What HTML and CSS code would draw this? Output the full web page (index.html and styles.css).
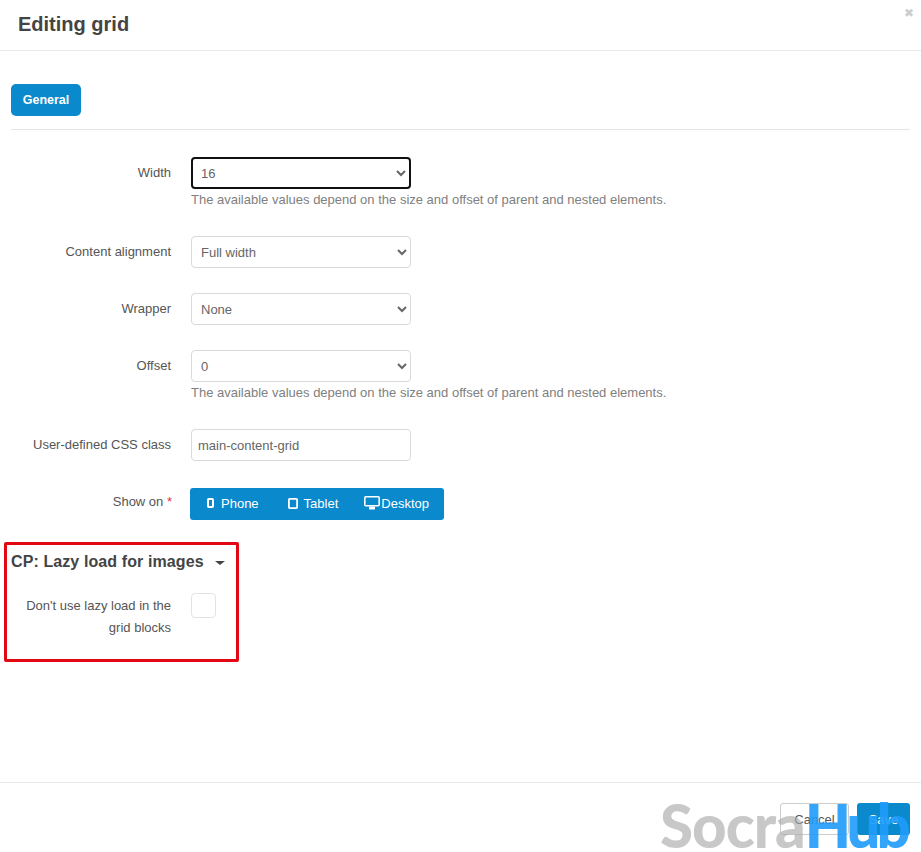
FILE: index.html
```html
<!DOCTYPE html>
<html lang="en">
<head>
    <meta charset="UTF-8">
    <meta name="viewport" content="width=device-width, initial-scale=1.0">
    <title>Editing grid</title>
    <link rel="stylesheet" href="styles.css">
</head>
<body>
    <div class="modal">
        <div class="modal-header">
            <h2>Editing grid</h2>
            <span class="close">&#10006;</span>
        </div>

        <div class="modal-body">
            <div class="tabs">
                <button type="button" class="tab">General</button>
            </div>

            <div class="row row-help">
                <label class="row-label">Width</label>
                <div class="field">
                    <select class="control select-focused"><option>16</option></select>
                    <p class="help">The available values depend on the size and offset of parent and nested elements.</p>
                </div>
            </div>

            <div class="row">
                <label class="row-label">Content alignment</label>
                <div class="field">
                    <select class="control"><option>Full width</option></select>
                </div>
            </div>

            <div class="row">
                <label class="row-label">Wrapper</label>
                <div class="field">
                    <select class="control"><option>None</option></select>
                </div>
            </div>

            <div class="row row-help">
                <label class="row-label">Offset</label>
                <div class="field">
                    <select class="control"><option>0</option></select>
                    <p class="help">The available values depend on the size and offset of parent and nested elements.</p>
                </div>
            </div>

            <div class="row row-css">
                <label class="row-label">User-defined CSS class</label>
                <div class="field">
                    <input type="text" class="control control-text" value="main-content-grid">
                </div>
            </div>

            <div class="row row-show">
                <label class="row-label">Show on <span class="required">*</span></label>
                <div class="device-group">
                    <span class="device device-phone">
                        <svg width="7" height="10" viewBox="0 0 7 10"><rect x="1" y="1" width="5" height="8" rx="0.8" fill="none" stroke="#fff" stroke-width="2"/></svg>
                        Phone
                    </span>
                    <span class="device device-tablet">
                        <svg width="10" height="11" viewBox="0 0 10 11"><rect x="0.9" y="0.9" width="8.2" height="9.2" rx="0.8" fill="none" stroke="#fff" stroke-width="1.8"/></svg>
                        Tablet
                    </span>
                    <span class="device device-desktop">
                        <svg width="16" height="14" viewBox="0 0 16 14"><rect x="0.8" y="0.8" width="14.4" height="9" rx="1" fill="#0a8acd" stroke="#fff" stroke-width="1.6"/><path d="M5 13.5h6v-3H5z" fill="#fff"/></svg>
                        Desktop
                    </span>
                </div>
            </div>

            <div class="section-box">
                <h3 class="section-title">CP: Lazy load for images <span class="caret"></span></h3>
                <div class="row row-check">
                    <label class="row-label">Don't use lazy load in the grid blocks</label>
                    <span class="checkbox"></span>
                </div>
            </div>
        </div>

        <div class="modal-footer">
            <button type="button" class="btn btn-cancel">Cancel</button>
            <button type="button" class="btn btn-save">Save</button>
        </div>

        <div class="watermark">Socra<span class="watermark-blue">Hub</span></div>
    </div>
</body>
</html>
```

FILE: styles.css
```css
* {
    box-sizing: border-box;
}
body {
    margin: 0;
    background: #fff;
    font-family: "Liberation Sans", Arial, sans-serif;
    font-size: 14px;
    color: #555;
}
.modal {
    position: relative;
    width: 921px;
    height: 852px;
    overflow: hidden;
    display: flex;
    flex-direction: column;
}
.modal-header {
    height: 51px;
    padding: 12px 18px 0;
    border-bottom: 1px solid #e9e9e9;
    position: relative;
}
.modal-header h2 {
    margin: 0;
    font-size: 20px;
    line-height: 24px;
    font-weight: bold;
    color: #444;
}
.close {
    position: absolute;
    top: 6px;
    right: 7px;
    font-size: 12px;
    line-height: 14px;
    color: #ccc;
}
.modal-body {
    flex: 1;
    padding: 33px 11px 0;
}
.tabs {
    height: 46px;
    border-bottom: 1px solid #e5e5e5;
    margin-bottom: 27px;
}
.tab {
    width: 70px;
    height: 32px;
    padding: 0;
    background: #0a8acd;
    border: none;
    border-radius: 5px;
    color: #fff;
    font-family: inherit;
    font-size: 12.5px;
    font-weight: bold;
}
.row {
    display: flex;
    align-items: flex-start;
    margin-bottom: 25px;
}
.row-help {
    margin-bottom: 29px;
}
.row-css {
    margin-bottom: 27px;
}
.row-label {
    width: 160px;
    margin-right: 20px;
    padding-top: 7px;
    text-align: right;
    font-size: 13px;
    line-height: 17px;
    color: #555;
}
.field {
    width: 700px;
}
.control {
    display: block;
    width: 220px;
    height: 32px;
    padding: 0 5px;
    background: #fff;
    border: 1px solid #d9d9d9;
    border-radius: 4px;
    font-family: inherit;
    font-size: 13px;
    color: #666;
    outline: none;
}
.select-focused {
    border: 2px solid #111;
    border-radius: 4px;
    padding: 0 4px;
}
.control-text {
    padding: 0 6px;
}
.help {
    margin: 3px 0 0;
    font-size: 13px;
    line-height: 15px;
    color: #808080;
}
.row-show {
    margin-left: -1px;
    margin-bottom: 22px;
}
.row-show .row-label {
    width: 161px;
    margin-left: 1px;
    margin-right: 18px;
    padding-top: 5px;
}
.required {
    color: #e0344b;
}
.device-group {
    width: 254px;
    height: 32px;
    padding-bottom: 2px;
    display: flex;
    align-items: center;
    background: #0a8acd;
    border-radius: 3px;
    color: #fff;
    font-size: 13px;
}
.device {
    display: flex;
    align-items: center;
}
.device-phone {
    gap: 7px;
    margin-left: 17px;
}
.device-tablet {
    gap: 6px;
    margin-left: 29px;
}
.device-desktop {
    gap: 1px;
    margin-left: 26px;
}
.section-box {
    margin: 0 0 0 -7px;
    width: 235px;
    height: 120px;
    padding: 8px 4px 0;
    border: 3px solid #e30613;
    border-radius: 2px;
}
.section-title {
    margin: 0 0 22px;
    font-size: 16px;
    line-height: 18px;
    font-weight: bold;
    letter-spacing: 0.1px;
    color: #444;
    white-space: nowrap;
}
.caret {
    display: inline-block;
    margin-left: 7px;
    vertical-align: middle;
    border-top: 4px solid #444;
    border-left: 5px solid transparent;
    border-right: 5px solid transparent;
}
.row-check {
    margin: 0;
}
.row-check .row-label {
    width: 160px;
    margin-right: 20px;
    padding-top: 2px;
    line-height: 22px;
}
.checkbox {
    flex: none;
    width: 25px;
    height: 25px;
    border: 1px solid #e3e3e3;
    border-radius: 4px;
}
.modal-footer {
    height: 70px;
    padding: 20px 11px 0 0;
    border-top: 1px solid #e9e9e9;
    display: flex;
    justify-content: flex-end;
    gap: 8px;
}
.btn {
    height: 32px;
    padding: 0;
    border-radius: 3px;
    font-family: inherit;
    font-size: 13px;
}
.btn-cancel {
    width: 69px;
    background: #fff;
    border: 1px solid #ccc;
    color: #555;
}
.btn-save {
    width: 53px;
    background: #0a8acd;
    border: none;
    color: #fff;
}
.watermark {
    position: absolute;
    left: 660px;
    top: 798px;
    font-family: Lato, sans-serif;
    font-size: 60px;
    line-height: 54px;
    font-weight: 900;
    letter-spacing: -1px;
    color: rgba(170, 170, 170, 0.65);
    white-space: nowrap;
    pointer-events: none;
}
.watermark-blue {
    letter-spacing: -4px;
    color: rgba(30, 155, 250, 0.9);
}
```
